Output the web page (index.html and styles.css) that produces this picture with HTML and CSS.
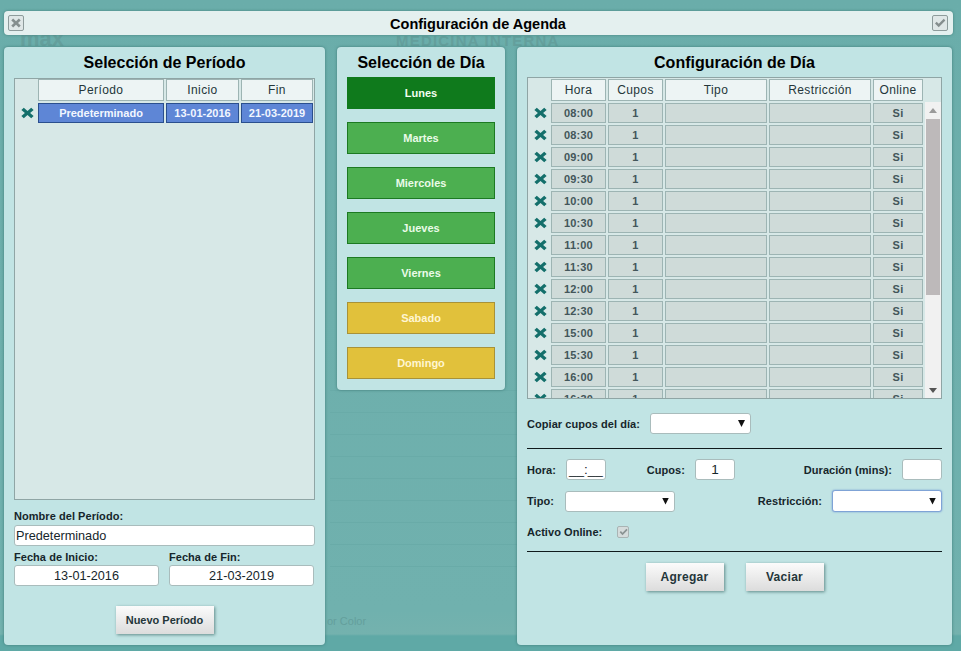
FILE: index.html
```html
<!DOCTYPE html>
<html lang="es">
<head>
    <meta charset="UTF-8">
    <meta name="viewport" content="width=device-width, initial-scale=1.0">
    <title>Configuración de Agenda</title>
    <link rel="stylesheet" href="styles.css">
</head>
<body>
    <svg width="0" height="0" class="defs">
        <symbol id="icon-x" viewBox="0 0 14 14">
            <path d="M3 .8 7 4.6 11 .8 13.6 3.4 9.8 7 13.6 10.6 11 13.2 7 9.4 3 13.2 .4 10.6 4.2 7 .4 3.4Z"/>
        </symbol>
    </svg>

    <!-- Fondo de la pagina detras del modal -->
    <div class="ghost ghost-max">max</div>
    <div class="ghost ghost-med">MEDICINA INTERNA</div>
    <div class="ghost ghost-color">or Color</div>
    <div class="ghost ghost-grid"></div>

    <div class="modal">
        <header class="titlebar">
            <button class="tool-btn" type="button">
                <svg width="10" height="10" viewBox="0 0 14 14"><use href="#icon-x"/></svg>
            </button>
            <h1>Configuración de Agenda</h1>
            <button class="tool-btn" type="button">
                <svg width="12" height="10" viewBox="0 0 14 12"><path d="M1 6.5 3 4.5 5.5 7 11.5 1 13.4 3 5.5 11Z"/></svg>
            </button>
        </header>

        <div class="panels">
            <!-- Periodo -->
            <section class="panel panel-periodo">
                <h2>Selección de Período</h2>
                <div class="grid-frame periodo-frame">
                    <div class="row periodo-row">
                        <span></span>
                        <div class="cell head">Período</div>
                        <div class="cell head">Inicio</div>
                        <div class="cell head">Fin</div>
                    </div>
                    <div class="row periodo-row selected">
                        <svg class="del" viewBox="0 0 14 14" preserveAspectRatio="none"><use href="#icon-x"/></svg>
                        <div class="cell">Predeterminado</div>
                        <div class="cell">13-01-2016</div>
                        <div class="cell">21-03-2019</div>
                    </div>
                </div>
                <label class="lbl lbl-nombre">Nombre del Período:</label>
                <input class="txt txt-nombre" type="text" value="Predeterminado">
                <div class="fechas">
                    <div class="fecha">
                        <label class="lbl">Fecha de Inicio:</label>
                        <input class="txt center" type="text" value="13-01-2016">
                    </div>
                    <div class="fecha">
                        <label class="lbl">Fecha de Fin:</label>
                        <input class="txt center" type="text" value="21-03-2019">
                    </div>
                </div>
                <button class="btn btn-nuevo" type="button">Nuevo Período</button>
            </section>

            <!-- Dia -->
            <section class="panel panel-dia">
                <h2>Selección de Día</h2>
                <div class="dias">
                    <button class="dia active" type="button">Lunes</button>
                    <button class="dia" type="button">Martes</button>
                    <button class="dia" type="button">Miercoles</button>
                    <button class="dia" type="button">Jueves</button>
                    <button class="dia" type="button">Viernes</button>
                    <button class="dia finde" type="button">Sabado</button>
                    <button class="dia finde" type="button">Domingo</button>
                </div>
            </section>

            <!-- Configuracion -->
            <section class="panel panel-config">
                <h2>Configuración de Día</h2>
                <div class="grid-frame config-frame">
                    <div class="row config-row config-head">
                        <span></span>
                        <div class="cell head">Hora</div>
                        <div class="cell head">Cupos</div>
                        <div class="cell head">Tipo</div>
                        <div class="cell head">Restricción</div>
                        <div class="cell head">Online</div>
                    </div>
                    <div class="config-body">
                        <div class="config-rows" id="filas"></div>
                        <div class="scrollbar">
                            <span class="arrow up"></span>
                            <span class="thumb"></span>
                            <span class="arrow down"></span>
                        </div>
                    </div>
                </div>

                <div class="form-line copiar">
                    <label class="lbl">Copiar cupos del día:</label>
                    <div class="select select-copiar"></div>
                </div>
                <hr>
                <div class="form-line hora-line">
                    <label class="lbl lbl-hora">Hora:</label>
                    <input class="txt small center" type="text" value="__:__">
                    <label class="lbl lbl-cupos">Cupos:</label>
                    <input class="txt small center" type="text" value="1">
                    <label class="lbl lbl-duracion">Duración (mins):</label>
                    <input class="txt small" type="text">
                </div>
                <div class="form-line tipo-line">
                    <label class="lbl lbl-tipo">Tipo:</label>
                    <div class="select select-tipo"></div>
                    <label class="lbl lbl-restriccion">Restricción:</label>
                    <div class="select select-restriccion"></div>
                </div>
                <div class="form-line online-line">
                    <label class="lbl lbl-online">Activo Online:</label>
                    <span class="check">
                        <svg width="9" height="8" viewBox="0 0 14 12"><path d="M1 6.5 3 4.5 5.5 7 11.5 1 13.4 3 5.5 11Z"/></svg>
                    </span>
                </div>
                <hr>
                <div class="acciones">
                    <button class="btn" type="button">Agregar</button>
                    <button class="btn" type="button">Vaciar</button>
                </div>
            </section>
        </div>
    </div>

    <script>
        var horas = ["08:00", "08:30", "09:00", "09:30", "10:00", "10:30", "11:00", "11:30",
                     "12:00", "12:30", "15:00", "15:30", "16:00", "16:30"];
        var filas = document.getElementById("filas");
        var html = "";
        for (var i = 0; i < horas.length; i++) {
            html += '<div class="row config-row">' +
                '<svg class="del" viewBox="0 0 14 14" preserveAspectRatio="none"><use href="#icon-x"/></svg>' +
                '<div class="cell">' + horas[i] + '</div>' +
                '<div class="cell">1</div>' +
                '<div class="cell"></div>' +
                '<div class="cell"></div>' +
                '<div class="cell">Si</div>' +
                '</div>';
        }
        filas.innerHTML = html;
    </script>
</body>
</html>
```

FILE: styles.css
```css
* {
    box-sizing: border-box;
}

body {
    margin: 0;
    width: 961px;
    height: 651px;
    overflow: hidden;
    position: relative;
    font-family: "Liberation Sans", Arial, sans-serif;
    color: #16262b;
    background: linear-gradient(#6aadaa 0, #70b1ae 610px, #74b2ae 634px, #5fa9a6 636px, #5fa9a6 100%);
}

.defs {
    position: absolute;
}

.ghost {
    position: absolute;
    color: #649f9c;
}

.ghost-max {
    left: 20px;
    top: 26px;
    font-size: 22px;
    font-weight: bold;
}

.ghost-med {
    left: 396px;
    top: 32px;
    font-size: 15px;
    font-weight: bold;
    letter-spacing: 1.2px;
}

.ghost-color {
    left: 327px;
    top: 615px;
    font-size: 11px;
}

.ghost-grid {
    left: 330px;
    top: 390px;
    width: 190px;
    height: 184px;
    background-image: repeating-linear-gradient(#69aba8 0, #69aba8 1px, transparent 1px, transparent 22px);
}

.modal {
    position: relative;
    padding: 11px 8px 0 4px;
}

.titlebar {
    display: flex;
    align-items: center;
    justify-content: space-between;
    height: 24px;
    margin-bottom: 12px;
    padding: 0 5px 0 4px;
    border-radius: 4px;
    background-color: #e4f0ef;
    box-shadow: 0 0 3px #44807d;
}

.titlebar h1 {
    margin: 0;
    padding-top: 1px;
    font-size: 14.5px;
    color: #000;
}

.tool-btn {
    display: flex;
    align-items: center;
    justify-content: center;
    width: 16px;
    height: 16px;
    padding: 0;
    border: 1px solid #8d9b9b;
    border-radius: 2px;
    background-color: #dfe7e7;
}

.tool-btn svg {
    fill: #858e8e;
}

.panels {
    display: flex;
    align-items: flex-start;
    gap: 12px;
}

.panel {
    border-radius: 4px;
    background-color: #c1e4e4;
    box-shadow: 0 0 3px #3f7a78;
}

.panel h2 {
    margin: 0;
    font-size: 16px;
    line-height: 20px;
    text-align: center;
    color: #000;
}

.panel-periodo {
    width: 321px;
    height: 598px;
    padding: 6px 10px 0;
}

.panel-dia {
    width: 168px;
    height: 343px;
    padding: 6px 10px 0;
}

.panel-config {
    width: 435px;
    height: 598px;
    padding: 6px 10px 0;
}

.grid-frame {
    border: 1px solid #8fa5a5;
    background-color: #d7e8e7;
}

.row {
    display: grid;
    gap: 2px;
    font-size: 11px;
}

.cell {
    display: flex;
    align-items: center;
    justify-content: center;
    border: 1px solid #9db4b3;
    background-color: #cfdbd9;
    font-weight: bold;
    color: #43565a;
    letter-spacing: .2px;
}

.cell.head {
    background-color: #edf4f4;
    font-weight: normal;
    font-size: 12px;
    color: #24363a;
    letter-spacing: .4px;
}

.del {
    align-self: center;
    justify-self: center;
    width: 13px;
    height: 12px;
    margin-left: 3px;
    fill: #136f6b;
}

.periodo-frame {
    height: 422px;
    margin-top: 5px;
}

.periodo-row {
    grid-template-columns: 21px 126px 73px 72px;
    height: 22px;
}

.periodo-row.selected {
    height: 20px;
    margin-top: 2px;
}

.periodo-row.selected .cell {
    border-color: #2a4f8e;
    background-color: #5e86d6;
    color: #f2f6ff;
    letter-spacing: 0;
}

.lbl {
    font-size: 11px;
    font-weight: bold;
    color: #16262b;
    letter-spacing: .05px;
    white-space: nowrap;
}

.lbl-nombre {
    display: block;
    margin-top: 10px;
    line-height: 13px;
}

.txt {
    height: 21px;
    padding: 0 1px;
    border: 1px solid #a9bcbc;
    border-radius: 3px;
    background-color: #fff;
    font-family: inherit;
    font-size: 12.7px;
    color: #16262b;
}

.txt.center {
    text-align: center;
}

.txt-nombre {
    display: block;
    width: 301px;
    margin-top: 2px;
}

.fechas {
    display: flex;
    gap: 10px;
    margin-top: 5px;
}

.fecha .lbl {
    display: block;
    line-height: 13px;
}

.fecha .txt {
    display: block;
    width: 145px;
    margin-top: 1px;
}

.btn {
    width: 78px;
    height: 28px;
    padding: 0;
    border: 0;
    background: linear-gradient(#fbfbfb, #dcdcdc);
    box-shadow: 1px 1px 3px #5f8a88;
    font-family: inherit;
    font-size: 12px;
    font-weight: bold;
    color: #24363a;
    letter-spacing: .3px;
}

.btn-nuevo {
    display: block;
    width: 98px;
    margin: 20px auto 0;
    font-size: 11px;
    letter-spacing: 0;
}

.dias {
    display: flex;
    flex-direction: column;
    gap: 13px;
    margin-top: 4px;
}

.dia {
    height: 32px;
    padding: 0 0 1px;
    border: 1px solid #1c7a22;
    background-color: #4caf50;
    font-family: inherit;
    font-size: 11px;
    font-weight: bold;
    color: #eafbe8;
}

.dia.active {
    border-color: #0f7a1c;
    background-color: #0f7a1c;
    color: #f2fff0;
}

.dia.finde {
    border-color: #a89238;
    background-color: #e1c13b;
    color: #fff6d2;
}

.config-frame {
    height: 322px;
    margin-top: 4px;
    overflow: hidden;
}

.config-row {
    grid-template-columns: 21px 55px 55px 102px 102px 50px;
    height: 20px;
    flex-shrink: 0;
}

.config-head {
    height: 22px;
    margin-top: 1px;
    margin-bottom: 1px;
}

.config-body {
    display: flex;
    justify-content: space-between;
    height: 296px;
    background-color: #d7e8e7;
}

.config-rows {
    display: flex;
    flex-direction: column;
    gap: 2px;
    width: 397px;
    padding-top: 1px;
    overflow: hidden;
}

.scrollbar {
    display: flex;
    flex-direction: column;
    justify-content: space-between;
    width: 16px;
    background-color: #f1f1f1;
}

.scrollbar .thumb {
    height: 176px;
    margin: 2px 1px auto;
    background-color: #bdb9ba;
}

.arrow {
    flex-shrink: 0;
    width: 8px;
    height: 5px;
    margin: 6px auto 4px;
    background-color: #9a9a9a;
    clip-path: polygon(50% 0, 100% 100%, 0 100%);
}

.arrow.down {
    margin: 0 auto 5px;
    background-color: #555;
    clip-path: polygon(0 0, 100% 0, 50% 100%);
}

.form-line {
    display: flex;
    align-items: center;
}

.copiar {
    margin-top: 14px;
}

.copiar .lbl {
    width: 123px;
}

.select {
    display: flex;
    align-items: center;
    justify-content: flex-end;
    height: 21px;
    padding-right: 5px;
    border: 1px solid #a9bcbc;
    border-radius: 3px;
    background-color: #fff;
}

.select::after {
    content: "";
    width: 7px;
    height: 7px;
    background-color: #111;
    clip-path: polygon(0 0, 100% 0, 50% 100%);
}

.select-copiar {
    width: 101px;
}

hr {
    height: 1px;
    margin: 14px 0 0;
    border: 0;
    background-color: #0f1a1c;
}

.hora-line {
    margin-top: 10px;
}

.txt.small {
    width: 40px;
    font-size: 13.5px;
}

.lbl-hora {
    width: 39px;
}

.lbl-cupos {
    width: 79px;
    margin-right: 10px;
    text-align: right;
}

.lbl-duracion {
    width: 157px;
    margin-right: 10px;
    text-align: right;
}

.tipo-line {
    height: 22px;
    margin-top: 10px;
}

.lbl-tipo {
    width: 38px;
}

.select-tipo {
    width: 110px;
}

.lbl-restriccion {
    width: 147px;
    margin-right: 10px;
    text-align: right;
}

.select-restriccion {
    width: 110px;
    height: 22px;
    border-color: #7fa3d6;
    box-shadow: 0 0 2px #6f97d2;
}

.online-line {
    height: 16px;
    margin-top: 12px;
}

.lbl-online {
    width: 90px;
}

.check {
    display: flex;
    align-items: center;
    justify-content: center;
    width: 12px;
    height: 12px;
    border: 1px solid #a9b4b4;
    border-radius: 2px;
    background-color: #d5dcdc;
}

.check svg {
    fill: #8a9393;
}

.online-line + hr {
    margin-top: 11px;
}

.acciones {
    display: flex;
    justify-content: center;
    gap: 22px;
    margin-top: 11px;
}
```
